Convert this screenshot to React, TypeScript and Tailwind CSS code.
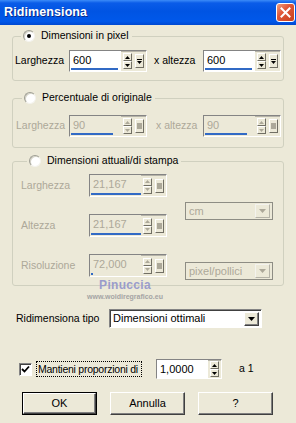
import type { ReactNode } from 'react'

const FONT = "font-['Liberation_Sans',Arial,sans-serif]"
const DIS = 'text-[#aca899]'

function Radio({ checked }: { checked?: boolean }) {
  return (
    <span className="w-[12px] h-[12px] rounded-full bg-white border border-t-[#9d9d92] border-l-[#9d9d92] border-r-[#f4f3ee] border-b-[#f4f3ee] shadow-[inset_1px_1px_#d6d4c8] flex items-center justify-center shrink-0">
      {checked && <span className="w-[4px] h-[4px] rounded-full bg-black" />}
    </span>
  )
}

function MiniArrow({ dir, disabled }: { dir: 'up' | 'down'; disabled?: boolean }) {
  const c = disabled ? '#aca899' : '#000'
  return (
    <svg width="5" height="3" viewBox="0 0 5 3">
      {dir === 'up' ? <polygon points="2.5,0 5,3 0,3" fill={c} /> : <polygon points="0,0 5,0 2.5,3" fill={c} />}
    </svg>
  )
}

function MiniBtn({ children, className }: { children?: ReactNode; className: string }) {
  return (
    <span className={`bg-[#ece9d8] border border-t-white border-l-white border-r-[#716f64] border-b-[#716f64] flex items-center justify-center ${className}`}>
      {children}
    </span>
  )
}

function SpinBox({
  value,
  disabled,
  bar,
  menu = true,
  width = 'w-[78px]',
  height = 'h-[23px]',
}: {
  value: string
  disabled?: boolean
  bar?: string
  menu?: boolean
  width?: string
  height?: string
}) {
  return (
    <div className={`${width} ${height} flex shrink-0 bg-[#ece9d8] border border-t-[#848484] border-l-[#848484] border-r-white border-b-white shadow-[inset_1px_1px_#b5b3a8]`}>
      <div className={`flex-1 flex flex-col pt-[1px] pl-[1px] ${disabled ? 'bg-[#ece9d8]' : 'bg-white'}`}>
        <span className={`flex-1 pl-[2px] pt-[1px] text-[11px] leading-[15px] ${disabled ? DIS : 'text-black'}`}>{value}</span>
        {bar && <span className={`h-[2px] mb-[1px] bg-[#316ac5] ${bar}`} />}
      </div>
      <div className="flex flex-col justify-center px-[2px]">
        <MiniBtn className="w-[9px] h-[8px]">
          <MiniArrow dir="up" disabled={disabled} />
        </MiniBtn>
        <MiniBtn className="w-[9px] h-[8px]">
          <MiniArrow dir="down" disabled={disabled} />
        </MiniBtn>
      </div>
      {menu && (
        <div className="flex items-center pl-[1px] pr-[2px]">
          <MiniBtn className="w-[9px] h-[14px] flex-col gap-[1px]">
            {disabled ? (
              <span className="w-[5px] h-[6px] bg-[#aca899]" />
            ) : (
              <>
                <span className="w-[5px] h-[1px] bg-black" />
                <svg width="5" height="3" viewBox="0 0 5 3">
                  <polygon points="0,0 5,0 2.5,3" fill="#000" />
                </svg>
              </>
            )}
          </MiniBtn>
        </div>
      )}
    </div>
  )
}

function Combo({ value, disabled, className }: { value: string; disabled?: boolean; className: string }) {
  return (
    <div
      className={`flex shrink-0 border ${
        disabled
          ? 'border-[#8e8d84] bg-[#ece9d8]'
          : 'border-t-[#848484] border-l-[#848484] border-r-white border-b-white shadow-[inset_1px_1px_#404040] bg-white'
      } ${className}`}
    >
      <span className={`flex-1 pl-[3px] text-[11px] leading-[17px] whitespace-nowrap ${disabled ? DIS : 'text-black'}`}>{value}</span>
      <div className="flex items-center pr-[2px]">
        <span
          className={`w-[15px] h-[14px] flex items-center justify-center bg-[#ece9d8] border ${
            disabled
              ? 'border-t-[#f4f3ee] border-l-[#f4f3ee] border-r-[#b5b3a8] border-b-[#b5b3a8]'
              : 'border-t-white border-l-white border-r-[#404040] border-b-[#404040] shadow-[inset_-1px_-1px_#808080]'
          }`}
        >
          <svg width="7" height="4" viewBox="0 0 7 4">
            <polygon points="0,0 7,0 3.5,4" fill={disabled ? '#aca899' : '#000'} />
          </svg>
        </span>
      </div>
    </div>
  )
}

function Button({ label, isDefault }: { label: string; isDefault?: boolean }) {
  return (
    <div className={`w-[75px] h-[23px] ${isDefault ? 'border border-black' : ''}`}>
      <div className="w-full h-full bg-[#ece9d8] border border-t-white border-l-white border-r-[#404040] border-b-[#404040] shadow-[inset_-1px_-1px_#808080] flex items-center justify-center text-[11px] text-black">
        {label}
      </div>
    </div>
  )
}

function Group({ title, checked, className, children }: { title: string; checked?: boolean; className: string; children: ReactNode }) {
  return (
    <fieldset className={`mx-[12px] border border-[#d0d0bf] rounded-[3px] ${className}`}>
      <legend className="ml-[6px] px-[2px] h-[14px] flex items-center gap-[6px] text-[10.5px] text-black whitespace-nowrap">
        <Radio checked={checked} />
        <span className="pr-[1px]">{title}</span>
      </legend>
      {children}
    </fieldset>
  )
}

export default function App() {
  return (
    <div className={`${FONT} relative w-[296px] h-[423px] bg-[#ece9d8] flex flex-col overflow-hidden text-[10.5px] whitespace-nowrap`}>
      {/* title bar */}
      <div className="h-[25px] shrink-0 flex items-center justify-between pl-[4px] pr-[1px] bg-[linear-gradient(180deg,#3c8cf8_0%,#0a5ce8_12%,#0054e3_45%,#0058ea_85%,#0048d0_100%)]">
        <span className="text-white font-bold text-[12.5px] tracking-[0.1px] [text-shadow:1px_1px_#0a2a8a]">Ridimensiona</span>
        <span className="w-[19px] h-[19px] rounded-[3px] border border-white bg-[linear-gradient(135deg,#f0a080_0%,#e0583a_40%,#c8401c_100%)] flex items-center justify-center">
          <svg width="11" height="11" viewBox="0 0 11 11">
            <path d="M1.5 1.5 L9.5 9.5 M9.5 1.5 L1.5 9.5" stroke="#fff" strokeWidth="2" strokeLinecap="square" />
          </svg>
        </span>
      </div>

      <Group title="Dimensioni in pixel" checked className="mt-[4px] pl-[2px] pt-[7px] pb-[8px]">
        <div className="flex items-center h-[22px] text-black">
          <span className="w-[54px]">Larghezza</span>
          <SpinBox value="600" bar="w-[47px]" height="h-[22px]" />
          <span className="w-[56px] pl-[7px]">x altezza</span>
          <SpinBox value="600" bar="w-[47px]" height="h-[22px]" />
        </div>
      </Group>

      <Group title="Percentuale di originale" className="mt-[10px] pl-[3px] pt-[10px] pb-[10px]">
        <div className={`flex items-center h-[22px] ${DIS}`}>
          <span className="w-[53px]">Larghezza</span>
          <SpinBox value="90" bar="w-[42px]" disabled height="h-[22px]" />
          <span className="w-[56px] pl-[9px]">x altezza</span>
          <SpinBox value="90" bar="w-[42px]" disabled height="h-[22px]" />
        </div>
      </Group>

      <Group title="Dimensioni attuali/di stampa" className="mt-[6px] pl-[8px] pt-[6px] pb-[5px]">
        <div className={`flex ${DIS}`}>
          <div className="flex flex-col gap-[17px]">
            <div className="flex items-center h-[23px]">
              <span className="w-[68px]">Larghezza</span>
              <SpinBox value="21,167" bar="w-[50px]" disabled />
            </div>
            <div className="flex items-center h-[23px]">
              <span className="w-[68px]">Altezza</span>
              <SpinBox value="21,167" bar="w-[50px]" disabled />
            </div>
            <div className="flex items-center h-[23px]">
              <span className="w-[68px]">Risoluzione</span>
              <SpinBox value="72,000" bar="w-[2px]" disabled />
            </div>
          </div>
          <div className="flex flex-col ml-[18px] pt-[28px] gap-[42px]">
            <Combo value="cm" disabled className="w-[88px] h-[18px]" />
            <Combo value="pixel/pollici" disabled className="w-[88px] h-[18px]" />
          </div>
        </div>
      </Group>

      <div className="mt-[23px] h-[19px] flex items-center pl-[16px] text-black">
        <span className="w-[93px]">Ridimensiona tipo</span>
        <Combo value="Dimensioni ottimali" className="w-[153px] h-[19px]" />
      </div>

      <div className="mt-[31px] h-[20px] flex items-center pl-[19px] text-black">
        <span className="w-[13px] h-[13px] bg-white border border-t-[#848484] border-l-[#848484] border-r-white border-b-white shadow-[inset_1px_1px_#404040] flex items-center justify-center">
          <svg width="9" height="9" viewBox="0 0 9 9">
            <path d="M1 4 L3.5 6.5 L8 1.5" stroke="#000" strokeWidth="1.8" fill="none" />
          </svg>
        </span>
        <span className="ml-[4px] w-[106px] px-[1px] border border-dotted border-black leading-[14px] tracking-[-0.25px]">Mantieni proporzioni di</span>
        <span className="ml-[14px]">
          <SpinBox value="1,0000" menu={false} width="w-[66px]" height="h-[20px]" />
        </span>
        <span className="ml-[17px]">a 1</span>
      </div>

      <div className="mt-[13px] flex pl-[22px] gap-[13px]">
        <Button label="OK" isDefault />
        <Button label="Annulla" />
        <Button label="?" />
      </div>

      {/* watermark */}
      <div className="absolute left-[82px] top-[279px] w-[86px] flex flex-col items-center pointer-events-none">
        <span className="text-[12px] leading-[13px] font-bold text-[#9a9ccb] tracking-[0.3px]">Pinuccia</span>
        <span className="text-[7px] leading-[9px] text-[#a4a4a4] font-bold">www.woidiregrafico.eu</span>
      </div>
    </div>
  )
}
